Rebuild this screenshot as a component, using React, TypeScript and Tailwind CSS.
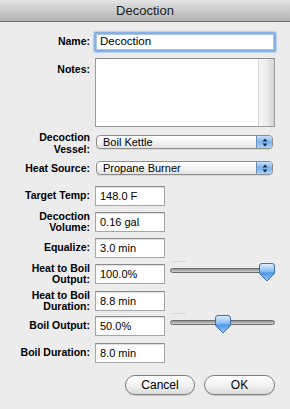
import React from "react";

const Label = ({ children, className = "" }: { children: React.ReactNode; className?: string }) => (
  <div className={`w-[90px] shrink-0 text-right font-bold text-[10.5px] leading-[11.5px] text-black ${className}`}>{children}</div>
);

const Field = ({ value }: { value: string }) => (
  <div className="w-[70px] h-[20px] bg-white border border-[#a5a5a5] border-t-[#8c8c8c] shadow-[inset_0_1px_0_#e0e0e0] flex items-center pl-[4px] text-[11px] text-black">
    {value}
  </div>
);

const Popup = ({ value }: { value: string }) => (
  <div className="w-[177px] h-[14px] rounded-[4px] border border-[#8e8e8e] bg-gradient-to-b from-[#ffffff] via-[#f4f4f4] to-[#e2e2e2] flex items-stretch overflow-hidden shadow-[0_1px_0_#d8d8d8]">
    <div className="flex-1 flex items-center pl-[6px] text-[11px] text-black leading-none">{value}</div>
    <div className="w-[16px] border-l border-[#6f8fb8] bg-gradient-to-b from-[#c9e1fa] via-[#79b2ee] to-[#a9d2fa] flex items-center justify-center">
      <svg width="6" height="9" viewBox="0 0 6 9">
        <path d="M3 0.5 L5.5 3.5 H0.5 Z" fill="#1c2a44" />
        <path d="M3 8.5 L5.5 5.5 H0.5 Z" fill="#1c2a44" />
      </svg>
    </div>
  </div>
);

const Slider = ({ pct }: { pct: number }) => {
  const trackW = 105;
  const thumbW = 16;
  const left = (trackW - thumbW) * pct;
  return (
    <div className="relative w-[105px] h-[20px] ml-[0px]">
      <div className="absolute left-0 right-0 top-[4px] h-[5px] rounded-full border border-[#6d6d6d] bg-gradient-to-b from-[#8a8a8a] via-[#b4b4b4] to-[#d0d0d0]" />
      <div className="absolute left-[2px] top-[-3px] w-[14px] h-[1px] bg-[#d8d8d8]" />
      <svg className="absolute top-[-1px]" style={{ left }} width="16" height="19" viewBox="0 0 16 19">
        <defs>
          <linearGradient id={`g${pct}`} x1="0" y1="0" x2="0" y2="1">
            <stop offset="0" stopColor="#e3f0fd" />
            <stop offset="0.45" stopColor="#86bdf4" />
            <stop offset="0.55" stopColor="#4e96ea" />
            <stop offset="1" stopColor="#9ccbf7" />
          </linearGradient>
        </defs>
        <path d="M3 0.5 H13 Q15.5 0.5 15.5 3 V10.5 L8 18 L0.5 10.5 V3 Q0.5 0.5 3 0.5 Z" fill={`url(#g${pct})`} stroke="#3f6ea8" strokeWidth="1" />
      </svg>
    </div>
  );
};

const Row = ({ label, value, mt, slider }: { label: React.ReactNode; value: string; mt: string; slider?: number }) => (
  <div className={`flex items-center h-[20px] gap-[5px] ${mt}`}>
    <Label>{label}</Label>
    <Field value={value} />
    {slider !== undefined && <Slider pct={slider} />}
  </div>
);

const Button = ({ children, w }: { children: React.ReactNode; w: string }) => (
  <div className={`${w} h-[20px] rounded-full border border-[#7d7d7d] bg-gradient-to-b from-[#ffffff] via-[#f2f2f2] to-[#dcdcdc] shadow-[0_1px_1px_rgba(0,0,0,0.15)] flex items-center justify-center text-[12px] text-black`}>
    {children}
  </div>
);

export default function App() {
  return (
    <div className="w-[290px] h-[409px] bg-[#ececec] overflow-hidden font-['Liberation_Sans',Arial,sans-serif]">
      <div className="h-[22px] bg-gradient-to-b from-[#e4e4e4] to-[#b3b3b3] border-b border-[#6f6f6f] flex items-center justify-center text-[13px] text-[#1a1a1a]">
        Decoction
      </div>

      <div className="flex items-center h-[20px] gap-[4px] mt-[10px]">
        <Label>Name:</Label>
        <div className="w-[182px] h-[20px] rounded-[2px] bg-white border-[2px] border-[#88b1e3] shadow-[0_0_1px_1px_#b9d2f0,inset_0_0_0_1px_#a9c4e6] flex items-center pl-[4px] text-[11.5px] text-black">
          Decoction
        </div>
      </div>

      <div className="flex items-start gap-[5px] mt-[6px]">
        <Label className="pt-[6px]">Notes:</Label>
        <div className="w-[180px] h-[69px] bg-white border border-[#9a9a9a] border-t-[#8a8a8a] flex">
          <div className="flex-1" />
          <div className="w-[16px] h-full border-l border-[#d6d6d6] bg-gradient-to-r from-[#f6f6f6] via-[#ececec] to-[#d4d4d4]" />
        </div>
      </div>

      <div className="flex items-center h-[14px] gap-[6px] mt-[8px]">
        <Label className="pt-[3px]">Decoction<br />Vessel:</Label>
        <Popup value="Boil Kettle" />
      </div>

      <div className="flex items-center h-[14px] gap-[6px] mt-[12px]">
        <Label className="pt-[2px]">Heat Source:</Label>
        <Popup value="Propane Burner" />
      </div>

      <Row mt="mt-[11px]" label="Target Temp:" value="148.0 F" />
      <Row mt="mt-[6px]" label={<>Decoction<br />Volume:</>} value="0.16 gal" />
      <Row mt="mt-[6px]" label="Equalize:" value="3.0 min" />
      <Row mt="mt-[6px]" label={<>Heat to Boil<br />Output:</>} value="100.0%" slider={1} />
      <Row mt="mt-[7px]" label={<>Heat to Boil<br />Duration:</>} value="8.8 min" />
      <Row mt="mt-[5px]" label="Boil Output:" value="50.0%" slider={0.5} />
      <Row mt="mt-[7px]" label="Boil Duration:" value="8.0 min" />

      <div className="flex justify-end gap-[9px] pr-[15px] mt-[12px]">
        <Button w="w-[70px]">Cancel</Button>
        <Button w="w-[71px]">OK</Button>
      </div>
    </div>
  );
}
